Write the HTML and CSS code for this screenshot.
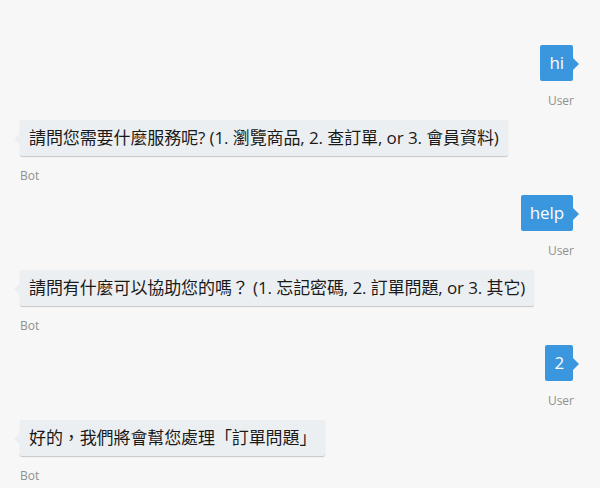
FILE: index.html
```html
<!DOCTYPE html>
<html lang="zh-Hant">
    <head>
        <meta charset="utf-8">
        <title>Chat</title>
        <link rel="stylesheet" href="styles.css">
    </head>

    <body>
        <div class="chat">
            <div class="message user">
                <div class="bubble">hi</div>
                <div class="from">User</div>
            </div>
            <div class="message bot">
                <div class="bubble">請問您需要什麼服務呢? (1. 瀏覽商品, 2. 查訂單, or 3. 會員資料)</div>
                <div class="from">Bot</div>
            </div>
            <div class="message user">
                <div class="bubble">help</div>
                <div class="from">User</div>
            </div>
            <div class="message bot">
                <div class="bubble">請問有什麼可以協助您的嗎？ (1. 忘記密碼, 2. 訂單問題, or 3. 其它)</div>
                <div class="from">Bot</div>
            </div>
            <div class="message user">
                <div class="bubble">2</div>
                <div class="from">User</div>
            </div>
            <div class="message bot">
                <div class="bubble">好的，我們將會幫您處理「訂單問題」</div>
                <div class="from">Bot</div>
            </div>
        </div>
    </body>
</html>
```

FILE: styles.css
```css
body {
    margin: 0;
    background-color: #f7f7f7;
    font-family: "Open Sans", "Noto Sans CJK TC", sans-serif;
}

.chat {
    display: flex;
    flex-direction: column;
    padding: 45px 27px 0 20px;
}

.message {
    display: flex;
    flex-direction: column;
    margin-bottom: 11px;
}

.message.user {
    align-items: flex-end;
}

.message.bot {
    align-items: flex-start;
}

.bubble {
    position: relative;
    padding: 8px 9px;
    font-size: 17px;
    line-height: 20px;
    letter-spacing: -0.1px;
    border-radius: 2px;
    min-width: 8px;
}

.bot .bubble {
    background-color: #eceff1;
    color: #1a1a1a;
    box-shadow: 0 1px 1px 0 rgba(0, 0, 0, 0.2);
}

.user .bubble {
    background-color: #3a96dd;
    color: #fff;
}

.bubble::before {
    content: "";
    position: absolute;
    top: 13px;
    border-top: 6px solid transparent;
    border-bottom: 6px solid transparent;
}

.bot .bubble::before {
    left: -6px;
    border-right: 6px solid #eceff1;
}

.user .bubble::before {
    right: -6px;
    border-left: 6px solid #3a96dd;
}

.from {
    margin-top: 12px;
    font-size: 12px;
    line-height: 16px;
    color: #909090;
}

.user .from {
    margin-right: -1px;
}
```
